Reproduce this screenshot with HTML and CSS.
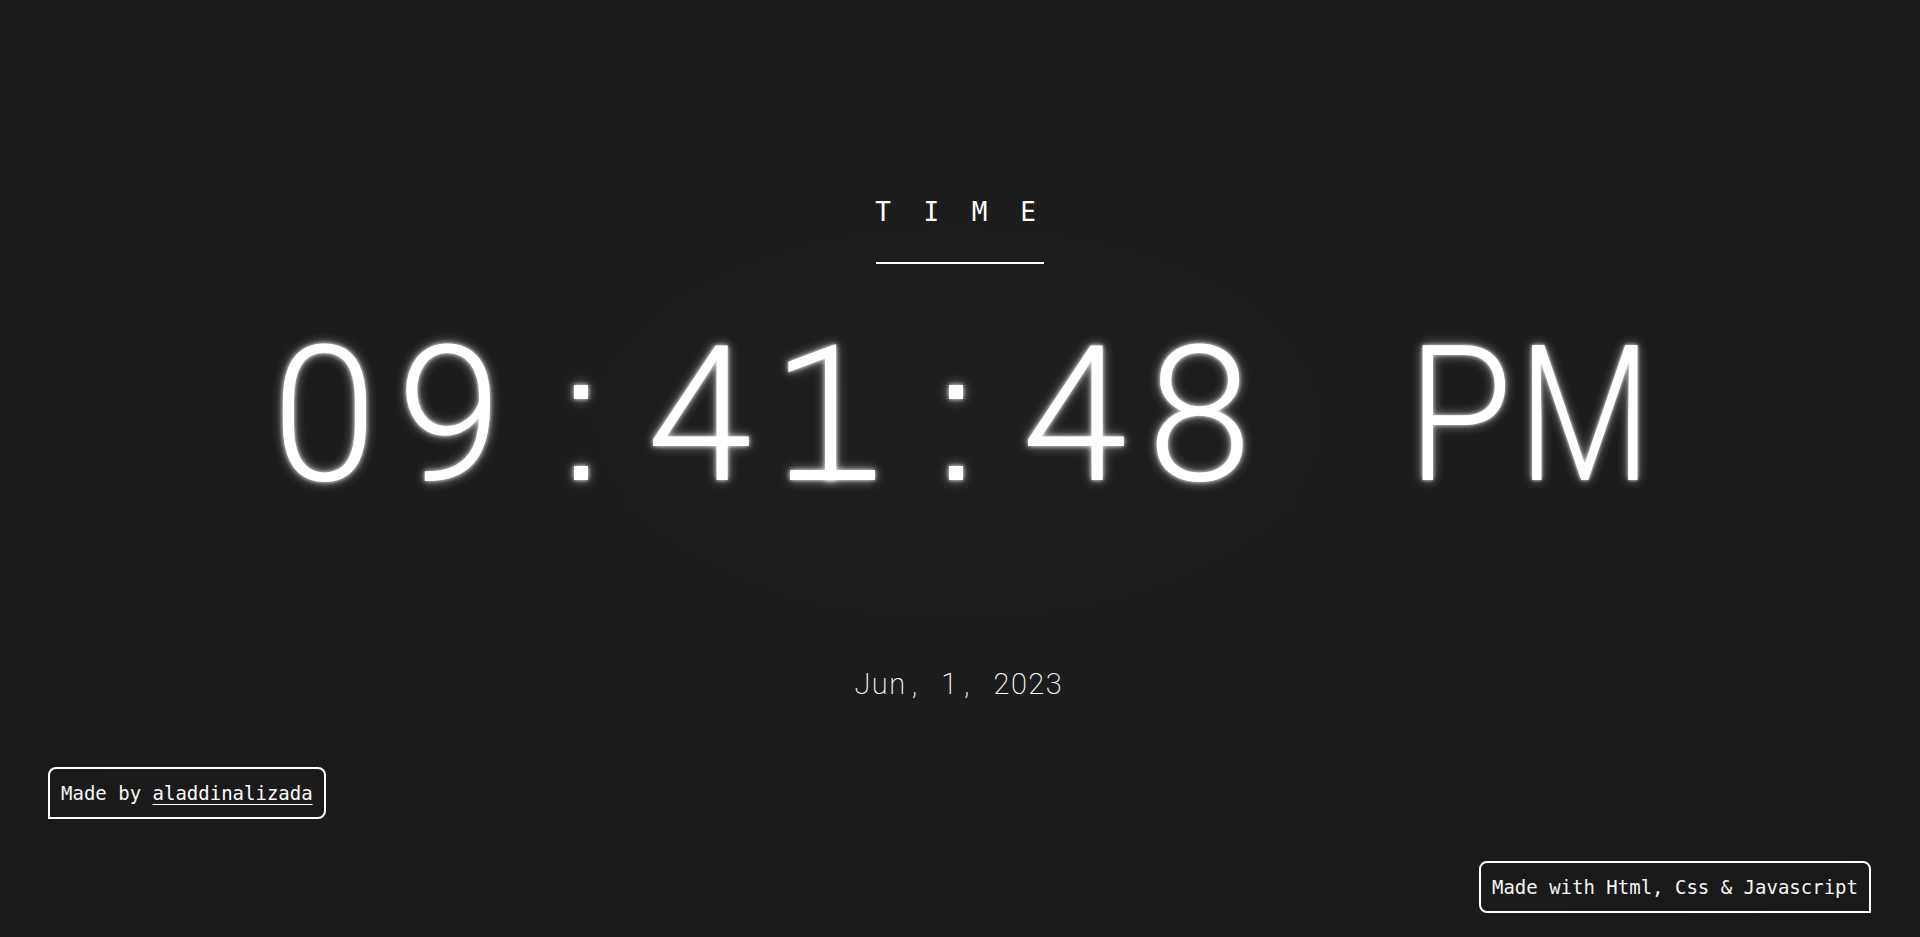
FILE: index.html
```html
<!DOCTYPE html>
<html lang="en">
<head>
<meta charset="utf-8">
<title>Time</title>
<link rel="stylesheet" href="styles.css">
</head>
<body>
<div class="page">
  <main class="clock-area">
    <div class="title">
      <span class="tc">T</span><span class="tc">I</span><span class="tc">M</span><span class="tc">E</span>
    </div>
    <div class="title-line"></div>
    <div class="clock" aria-label="09:41:48 PM">
      <span class="cc">0</span><span class="cc">9</span><span class="cc colon"><i class="dot"></i><i class="dot"></i></span><span class="cc">4</span><span class="cc one">1</span><span class="cc colon"><i class="dot"></i><i class="dot"></i></span><span class="cc">4</span><span class="cc">8</span>
      <span class="ampm"><span class="ac ac-p">P</span><span class="ac ac-m">M</span></span>
    </div>
    <div class="date">
      <span class="dc">J</span><span class="dc">u</span><span class="dc">n</span><span class="dc">,</span><span class="dc"> </span><span class="dc">1</span><span class="dc">,</span><span class="dc"> </span><span class="dc">2</span><span class="dc">0</span><span class="dc">2</span><span class="dc">3</span>
    </div>
  </main>
  <footer class="credits">
    <div class="badge badge-left">Made by <a class="author" href="#">aladdinalizada</a></div>
    <div class="badge badge-right">Made with Html, Css &amp; Javascript</div>
  </footer>
</div>
</body>
</html>
```

FILE: styles.css
```css
* { box-sizing: border-box; }
html, body {
  margin: 0;
  padding: 0;
  height: 100%;
}
body {
  background: radial-gradient(ellipse at 50% 45%, #1f1f1f 0%, #1c1c1c 45%, #191919 100%);
  color: #fff;
  font-family: "DejaVu Sans Mono", monospace;
  overflow: hidden;
}
.page {
  height: 937px;
  display: flex;
  flex-direction: column;
}
.clock-area {
  display: flex;
  flex-direction: column;
  align-items: center;
}
.title {
  margin-top: 197px;
  display: flex;
  padding-right: 9px;
  font-family: "DejaVu Sans Mono", monospace;
  font-size: 26px;
  line-height: 30px;
  height: 30px;
  color: #fff;
}
.tc {
  width: 48.33px;
  text-align: center;
}
.title-line {
  margin-top: 35px;
  width: 168px;
  height: 2px;
  background: #fff;
}
.clock {
  margin-top: 56px;
  display: flex;
  padding-right: 8px;
  font-family: Roboto, "Noto Sans", sans-serif;
  font-weight: 300;
  font-size: 190px;
  line-height: 190px;
  height: 190px;
  color: #fff;
  text-shadow: 0 0 4px rgba(255,255,255,0.9), 0 0 12px rgba(255,255,255,0.55);
}
.cc {
  width: 125px;
  text-align: center;
}
.colon {
  display: flex;
  flex-direction: column;
  align-items: center;
  padding-top: 65px;
  padding-left: 12px;
  gap: 67px;
}
.dot {
  display: block;
  width: 14px;
  height: 14px;
  background: #fff;
  box-shadow: 0 0 4px rgba(255,255,255,0.9), 0 0 12px rgba(255,255,255,0.55);
}
.one {
  position: relative;
}
.one::after {
  content: "";
  position: absolute;
  left: 28px;
  top: 150px;
  width: 85px;
  height: 10px;
  background: #fff;
  box-shadow: 0 0 4px rgba(255,255,255,0.9), 0 0 12px rgba(255,255,255,0.55);
}
.ampm {
  display: flex;
  margin-left: 128px;
}
.ac {
  width: 130px;
  text-align: center;
}
.ac-p {
  transform: translateX(5px) scaleX(0.9);
}
.ac-m {
  transform: translateX(-14px) scaleX(0.81);
}
.date {
  margin-top: 157px;
  display: flex;
  padding-right: 4px;
  font-family: Roboto, "Noto Sans", sans-serif;
  font-weight: 200;
  font-size: 29px;
  line-height: 34px;
  height: 34px;
  color: #fafafa;
  white-space: pre;
}
.dc {
  width: 17.4px;
  text-align: center;
}
.credits {
  margin-top: 66px;
  padding: 0 49px 24px 48px;
  display: flex;
  flex-direction: column;
  gap: 42px;
}
.badge {
  font-family: "DejaVu Sans Mono", monospace;
  font-size: 19px;
  line-height: 24px;
  padding: 12px 11px;
  border: 2px solid #fff;
  color: #f5f5f5;
  white-space: nowrap;
}
.badge-left {
  align-self: flex-start;
  border-radius: 8px 8px 8px 0;
}
.badge-right {
  align-self: flex-end;
  border-radius: 8px 8px 0 8px;
}
.author {
  color: #fff;
  text-decoration: underline;
  text-decoration-thickness: 1px;
  text-underline-offset: 4px;
}
```
